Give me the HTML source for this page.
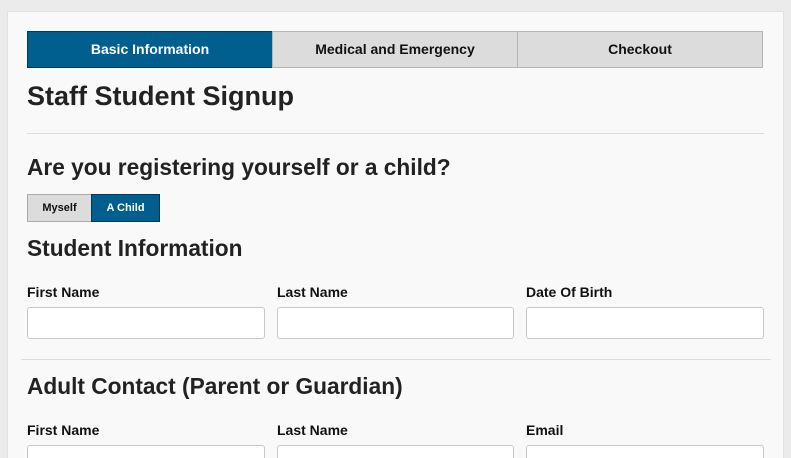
<!DOCTYPE html>
<html><head><style>
*{box-sizing:border-box;margin:0;padding:0}
html,body{width:791px;height:458px;overflow:hidden}
body{background:#ebebeb;font-family:"Liberation Sans",Arial,sans-serif;color:#222;position:relative}
.card{position:absolute;left:7px;top:11px;width:777px;height:460px;background:#f9f9f9;border:1px solid #e2e2e2}
.tab{position:absolute;top:31px;height:37px;background:#dcdcdc;border:1px solid #b5b5b5;font-weight:bold;font-size:14px;text-align:center;line-height:35px;color:#111}
.tab.on{background:#005f8f;border-color:#00395a;color:#fff}
h1{position:absolute;font-size:27px;font-weight:bold;color:#222}
h2{position:absolute;font-size:22.7px;font-weight:bold;color:#222}
.lbl{position:absolute;font-size:14px;font-weight:bold;color:#111}
.in{position:absolute;height:32px;background:#fff;border:1px solid #c8c8c8;border-radius:3px}
.hr{position:absolute;height:1px;background:#ddd}
.btn{position:absolute;top:194px;height:28px;font-size:11px;font-weight:bold;text-align:center;line-height:26px;border:1px solid #aaa;background:#dcdcdc;color:#111}
.btn.on{background:#005f8f;border-color:#00395a;color:#fff}
</style></head><body>
<div class="card"></div>
<div class="tab on" style="left:27px;width:246px">Basic Information</div>
<div class="tab" style="left:272px;width:246px">Medical and Emergency</div>
<div class="tab" style="left:517px;width:246px">Checkout</div>
<h1 style="left:27px;top:81px">Staff Student Signup</h1>
<div class="hr" style="left:27px;top:133px;width:737px"></div>
<h2 style="left:27px;top:154px">Are you registering yourself or a child?</h2>
<div class="btn" style="left:27px;width:65px">Myself</div>
<div class="btn on" style="left:91px;width:69px">A Child</div>
<h2 style="left:27px;top:235px">Student Information</h2>
<div class="lbl" style="left:27px;top:284px">First Name</div>
<div class="lbl" style="left:277px;top:284px">Last Name</div>
<div class="lbl" style="left:526px;top:284px">Date Of Birth</div>
<div class="in" style="left:27px;top:307px;width:238px"></div>
<div class="in" style="left:277px;top:307px;width:237px"></div>
<div class="in" style="left:526px;top:307px;width:238px"></div>
<div class="hr" style="left:21px;top:359px;width:750px"></div>
<h2 style="left:27px;top:373px">Adult Contact (Parent or Guardian)</h2>
<div class="lbl" style="left:27px;top:422px">First Name</div>
<div class="lbl" style="left:277px;top:422px">Last Name</div>
<div class="lbl" style="left:526px;top:422px">Email</div>
<div class="in" style="left:27px;top:445px;width:238px"></div>
<div class="in" style="left:277px;top:445px;width:237px"></div>
<div class="in" style="left:526px;top:445px;width:238px"></div>
</body></html>
